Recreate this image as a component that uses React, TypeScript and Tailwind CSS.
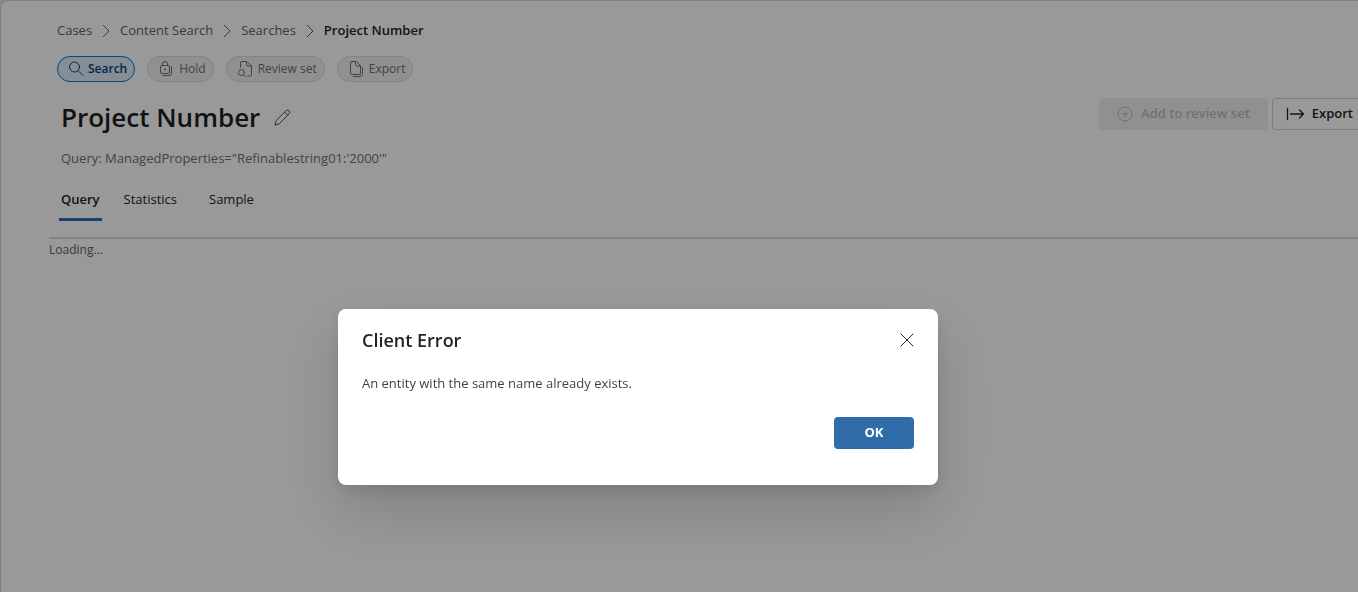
import { Fragment, type ReactNode } from "react";

const crumbs = ["Cases", "Content Search", "Searches"];

const SearchIcon = () => (
    <svg width="16" height="16" viewBox="0 0 16 16" fill="none" stroke="currentColor" strokeLinecap="round" aria-hidden="true">
        <circle cx="6.5" cy="6" r="5" />
        <path d="M10.2 9.7 15 14.5" />
    </svg>
);

const HoldIcon = () => (
    <svg width="16" height="16" viewBox="0 0 16 16" fill="none" stroke="currentColor" aria-hidden="true">
        <rect x="1.5" y="4.5" width="9" height="8" rx="1.5" />
        <path d="M3.5 4.5V3a2.5 2.5 0 0 1 5 0v1.5M12.5 5.5V12a2.5 2.5 0 0 1-2.500 2.500H3.500" />
        <circle cx="6" cy="8.500" r="1" fill="currentColor" stroke="none" />
    </svg>
);

const ReviewIcon = () => (
    <svg width="16" height="16" viewBox="0 0 16 16" fill="none" stroke="currentColor" strokeLinecap="round" aria-hidden="true">
        <path d="M2.5 6v-4a1.5 1.5 0 0 1 1.500-1.500h5l4.500 4.500V13.500a1.500 1.500 0 0 1-1.500 1.500H9.500M8.500 .5v3a1.500 1.500 0 0 0 1.500 1.500h3.500" />
        <circle cx="3.5" cy="11.5" r="3" />
        <path d="M5.7 13.700 7.700 15.500" />
    </svg>
);

const CopyIcon = () => (
    <svg width="16" height="16" viewBox="0 0 16 16" fill="none" stroke="currentColor" strokeLinecap="round" aria-hidden="true">
        <path d="M3 .5h4.500l4 4V12A1.500 1.500 0 0 1 10 13.500H3A1.500 1.500 0 0 1 1.500 12V2A1.500 1.500 0 0 1 3 .5ZM6.500 .5V3.500A1.500 1.500 0 0 0 8 5h3.500M13.500 6.500V12.500a3 3 0 0 1-3 3H4.500" />
    </svg>
);

const pills: { label: string; icon: ReactNode; active?: boolean }[] = [
    { label: "Search", icon: <SearchIcon />, active: true },
    { label: "Hold", icon: <HoldIcon /> },
    { label: "Review set", icon: <ReviewIcon /> },
    { label: "Export", icon: <CopyIcon /> },
];

function Breadcrumb() {
    return (
        <nav aria-label="Breadcrumb" className="flex h-5 items-center gap-2 text-[13px] leading-5 text-[#616161]">
            {crumbs.map((crumb) => (
                <Fragment key={crumb}>
                    <a href="#">{crumb}</a>
                    <svg width="12" height="14" viewBox="0 0 12 14" fill="none" stroke="currentColor" aria-hidden="true">
                        <path d="M3 2l6 6-6 6" />
                    </svg>
                </Fragment>
            ))}
            <span aria-current="page" className="font-semibold text-[#242424]">Project Number</span>
        </nav>
    );
}

function Pills() {
    return (
        <div className="mt-4 flex gap-3">
            {pills.map(({ label, icon, active }) => (
                <button
                    key={label}
                    type="button"
                    className={
                        "flex h-[26px] items-center gap-1 rounded-full border pr-[7px] text-xs " +
                        (active
                            ? "border-[#0078d4] bg-[#deecf9] pl-[10px] font-semibold text-[#004578]"
                            : "border-[#dadada] bg-[#f0f0f0] pl-[11px] font-medium text-[#707070]")
                    }
                >
                    {icon}
                    {label}
                </button>
            ))}
        </div>
    );
}

function Header() {
    return (
        <header className="mt-4 flex items-start justify-between">
            <div className="pl-1">
                <div className="flex h-[38px] items-center gap-[14px]">
                    <h1 className="text-[26px] leading-[38px] font-semibold text-[#1f1f1f]">Project Number</h1>
                    <button type="button" aria-label="Edit name" className="text-[#424242]">
                        <svg width="17" height="17" viewBox="0 0 18 18" fill="none" stroke="currentColor" strokeLinejoin="round" aria-hidden="true">
                            <path d="M1 17l1.200-4.600L12.800 1.800a2 2 0 0 1 3.200 3.200L5.500 15.700 1 17ZM11.300 3.300l3.300 3.300" />
                        </svg>
                    </button>
                </div>
                <p className="mt-3 text-[13px] leading-5 text-[#707070]">
                    Query: ManagedProperties="Refinablestring01:'2000'"
                </p>
            </div>
            <div className="flex gap-1 text-[13px] font-semibold whitespace-nowrap">
                <button type="button" disabled className="flex h-8 items-center gap-2 rounded-sm bg-[#f0f0f0] px-[18px] text-[#bdbdbd]">
                    <svg width="16" height="16" viewBox="0 0 16 16" fill="none" stroke="currentColor" strokeLinecap="round" aria-hidden="true">
                        <circle cx="8" cy="8" r="7" />
                        <path d="M8 5v6M5 8h6" />
                    </svg>
                    Add to review set
                </button>
                <button type="button" className="flex h-8 items-center gap-[7px] rounded-l-sm border border-r-0 border-[#d1d1d1] pr-[5px] pl-[13px] text-[#242424]">
                    <svg width="19" height="16" viewBox="0 0 19 16" fill="none" stroke="currentColor" strokeWidth="1.3" strokeLinecap="round" aria-hidden="true">
                        <path d="M1.500 2.500v11M4.500 8h13M13.500 4l4 4-4 4" />
                    </svg>
                    Export
                </button>
            </div>
        </header>
    );
}

function Tabs() {
    return (
        <div role="tablist" className="mt-[17px] flex gap-[22px] border-b-2 border-[#d8dadd] pb-4 pl-[10px] text-[13px] leading-5 text-[#242424]">
            <button type="button" role="tab" aria-selected="true" className="border-b-[3px] border-[#306baa] px-[2px] pt-1 pb-[9px] font-semibold">
                Query
            </button>
            <button type="button" role="tab" aria-selected="false" className="border-b-[3px] border-transparent pt-1 pb-[9px]">
                Statistics
            </button>
            <button type="button" role="tab" aria-selected="false" className="ml-[10px] border-b-[3px] border-transparent pt-1 pb-[9px]">
                Sample
            </button>
        </div>
    );
}

function ErrorDialog() {
    return (
        <div className="fixed inset-0 flex items-center justify-center bg-black/40 pt-[202px] pr-[82px]">
            <div
                role="dialog"
                aria-modal="true"
                aria-labelledby="dialog-title"
                className="w-full max-w-[600px] rounded-lg bg-white px-6 pt-[15px] pb-9 shadow-[0_26px_58px_rgba(0,0,0,0.16),0_5px_14px_rgba(0,0,0,0.1)]"
            >
                <div className="flex h-8 items-center justify-between">
                    <h2 id="dialog-title" className="text-lg font-semibold text-[#242424]">Client Error</h2>
                    <button type="button" aria-label="Close" className="text-[#242424]">
                        <svg width="14" height="14" viewBox="0 0 14 14" fill="none" stroke="currentColor" strokeLinecap="round" aria-hidden="true">
                            <path d="M1 1l12 12M13 1 1 13" />
                        </svg>
                    </button>
                </div>
                <p className="mt-[17px] text-[13px] leading-5 text-[#424242]">An entity with the same name already exists.</p>
                <div className="mt-6 flex justify-end">
                    <button type="button" className="h-8 w-20 rounded-sm bg-[#306baa] text-[13px] font-bold text-white">OK</button>
                </div>
            </div>
        </div>
    );
}

export default function App() {
    return (
        <div className="min-h-screen bg-[#e4e4e4] font-['Open_Sans','Noto_Sans',sans-serif]">
            <main className="min-h-screen rounded-tl-lg border-t border-l border-[#d6d6d6] bg-white pt-[19px] pl-12">
                <div className="pl-2">
                    <Breadcrumb />
                    <Pills />
                    <Header />
                </div>
                <Tabs />
                <p className="mt-px text-xs leading-5 text-[#616161]">Loading...</p>
            </main>
            <ErrorDialog />
        </div>
    );
}
